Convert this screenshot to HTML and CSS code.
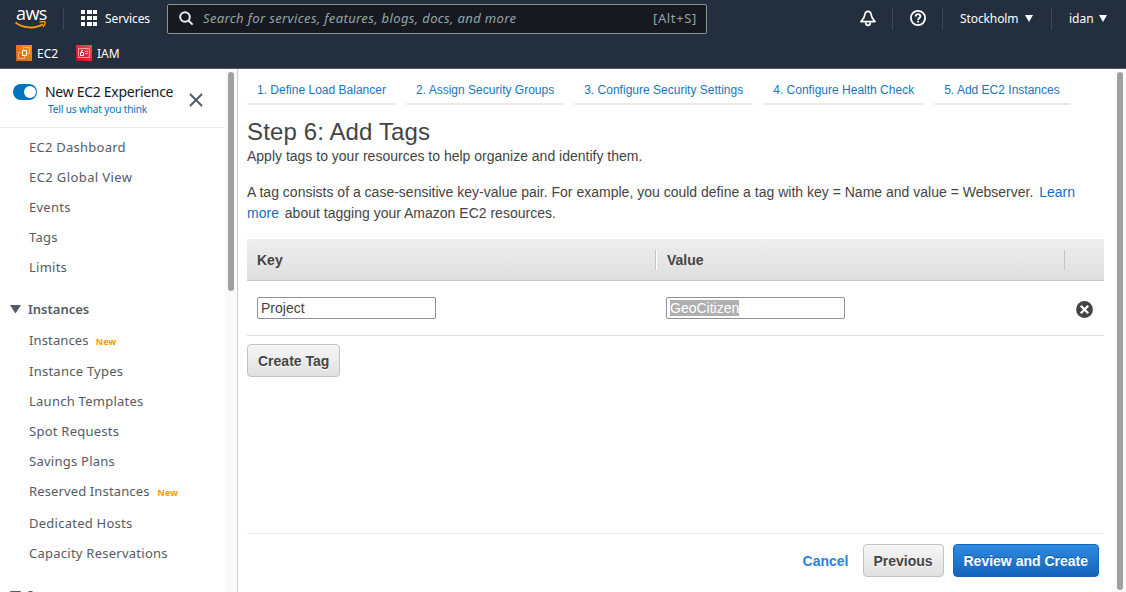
FILE: index.html
```
<!DOCTYPE html>
<html lang="en">
<head>
<meta charset="utf-8">
<title>Step 6: Add Tags</title>
<link rel="stylesheet" href="styles.css">
</head>
<body>
<header class="header">
  <div class="topbar">
    <a class="logo"><span class="logo-text">aws</span>
      <svg class="smile" width="32" height="9" viewBox="0 0 32 9"><path d="M.5 1.500C8 7.500 20 8 28 3.200" fill="none" stroke="#f90" stroke-width="1.900"/><path d="M24.500 1.200C27 .5 29.500 .4 30 1C30.400 2 29.500 4.500 28 6" fill="none" stroke="#f90" stroke-width="1.400"/></svg>
    </a>
    <span class="sep"></span>
    <a class="services">
      <svg width="17" height="17" viewBox="0 0 17 17" fill="#fff"><path d="M0 0h4v4H0zM6 0h5v4H6zM12 0h4v4h-4zM0 6h4v4H0zM6 6h5v4H6zM12 6h4v4h-4zM0 12h4v4H0zM6 12h5v4H6zM12 12h4v4h-4z"/></svg>
      <span class="services-text">Services</span>
    </a>
    <div class="search">
      <svg width="15" height="15" viewBox="0 0 15 15" fill="none" stroke="#eaeded" stroke-width="2"><circle cx="6" cy="6" r="4.800"/><path d="M9.500 9.500L13.600 13.600"/></svg>
      <span class="search-hint">Search for services, features, blogs, docs, and more</span>
      <span class="search-key">[Alt+S]</span>
    </div>
    <div class="tools">
      <svg class="bell" width="16" height="17" viewBox="0 0 16 17" fill="none" stroke="#fff" stroke-width="1.700" stroke-linejoin="round"><path d="M8 1.400C6 1.400 5 3 4.700 5.200C4.300 8.300 2.800 9 1 11.600H15C13.200 9 11.700 8.300 11.300 5.200C11 3 10 1.400 8 1.400Z"/><path d="M5.700 12.500C5.700 16.400 10.300 16.400 10.300 12.500"/></svg>
      <span class="sep"></span>
      <svg class="help" width="16" height="16" viewBox="0 0 16 16" fill="none" stroke="#fff" stroke-width="1.800"><circle cx="8" cy="8" r="7.100"/><path d="M5.700 6.400C5.700 3.500 10.400 3.500 10.400 6.300C10.400 8 8.100 7.900 8.100 9.900"/><path d="M8.100 10.800V12.600"/></svg>
      <span class="sep"></span>
      <span class="region">Stockholm</span><svg width="8" height="7" viewBox="0 0 8 7"><path d="M0 0H8L4 7Z" fill="#fff"/></svg>
      <span class="sep"></span>
      <span class="user">idan</span><svg width="8" height="7" viewBox="0 0 8 7"><path d="M0 0H8L4 7Z" fill="#fff"/></svg>
    </div>
  </div>
  <div class="favorites">
    <svg width="16" height="16" viewBox="0 0 16 16"><defs><linearGradient id="ec2" x1="0" y1="1" x2="1" y2="0"><stop stop-color="#d8640f"/><stop offset="1" stop-color="#f59010"/></linearGradient></defs><path d="M0 0H16V16H0Z" fill="url(#ec2)"/><g fill="none" stroke="#fff" stroke-width="1"><path d="M6.500 5.500h4v5h-4z"/><path d="M5 7.500H2.500V13.500H8.500V11" opacity=".45"/><path d="M7.500 5V2.500H13.500V8.500H11" opacity=".45"/></g></svg>
    <span class="fav-ec2">EC2</span>
    <svg width="16" height="16" viewBox="0 0 16 16"><defs><linearGradient id="iam" x1="0" y1="1" x2="1" y2="0"><stop stop-color="#c90c1d"/><stop offset="1" stop-color="#f84a50"/></linearGradient></defs><path d="M0 0H16V16H0Z" fill="url(#iam)"/><g fill="none" stroke="#fff" stroke-width="1"><path d="M2.500 3.500h11v9h-11z" opacity=".55"/><path d="M4.500 7.500h3v3h-3zM5.500 7V5.500H7"/><path d="M9 6.500h3M9 8.500h3" opacity=".6"/></g></svg>
    <span class="fav-iam">IAM</span>
  </div>
</header>
<div class="body">
  <aside class="sidebar">
    <div class="side-content">
      <div class="experience">
        <span class="toggle"><i class="knob"></i></span>
        <div class="exp-text"><div class="exp-title">New EC2 Experience</div><a class="exp-link">Tell us what you think</a></div>
        <svg class="close" width="14" height="14" viewBox="0 0 14 14" stroke="#545b64" stroke-width="2"><path d="M1 1L13 13M13 1L1 13"/></svg>
      </div>
      <nav class="links">
        <a class="link">EC2 Dashboard</a>
        <a class="link wide">EC2 Global View</a>
        <a class="link">Events</a>
        <a class="link">Tags</a>
        <a class="link">Limits</a>
      </nav>
      <div class="group"><svg width="11" height="9" viewBox="0 0 11 9"><path d="M0 0H11L5.500 8.500Z" fill="#545b64"/></svg><span class="group-text">Instances</span></div>
      <nav class="links">
        <a class="link tall"><span class="narrow">Instances</span><b class="new">New</b></a>
        <a class="link">Instance Types</a>
        <a class="link">Launch Templates</a>
        <a class="link">Spot Requests</a>
        <a class="link">Savings Plans</a>
        <a class="link tall reserved"><span class="narrow">Reserved Instances</span><b class="new">New</b></a>
        <a class="link">Dedicated Hosts</a>
        <a class="link">Capacity Reservations</a>
      </nav>
      <div class="group"><svg width="11" height="9" viewBox="0 0 11 9"><path d="M0 0H11L5.500 8.500Z" fill="#545b64"/></svg><span class="group-text">Images</span></div>
    </div>
    <div class="track"><div class="thumb side-thumb"></div></div>
  </aside>
  <main class="main">
    <nav class="tabs">
      <a class="tab">1. Define Load Balancer</a>
      <a class="tab">2. Assign Security Groups</a>
      <a class="tab">3. Configure Security Settings</a>
      <a class="tab">4. Configure Health Check</a>
      <a class="tab">5. Add EC2 Instances</a>
    </nav>
    <h1 class="title">Step 6: Add Tags</h1>
    <p class="sub">Apply tags to your resources to help organize and identify them.</p>
    <p class="desc">A tag consists of a case-sensitive key-value pair. For example, you could define a tag with key = Name and value = Webserver. <a class="learn">Learn more</a> about tagging your Amazon EC2 resources.</p>
    <div class="thead"><div class="th key">Key</div><div class="th value">Value</div><div class="th end"></div></div>
    <div class="row">
      <div class="input">Project</div>
      <div class="input second"><span class="selected">GeoCitizen</span></div>
      <svg class="remove" width="17" height="17" viewBox="0 0 17 17"><circle cx="8.500" cy="8.500" r="8.400" fill="#444"/><path d="M4.800 4.800L12.200 12.200M12.200 4.800L4.800 12.200" stroke="#fff" stroke-width="2.300"/></svg>
    </div>
    <button class="btn create">Create Tag</button>
    <footer class="actions">
      <a class="cancel">Cancel</a>
      <button class="btn previous">Previous</button>
      <button class="btn primary">Review and Create</button>
    </footer>
  </main>
  <div class="track"><div class="thumb main-thumb"></div></div>
</div>
</body>
</html>
```
FILE: styles.css
```
* { box-sizing: border-box; }
body { margin: 0; width: 1126px; height: 592px; overflow: hidden; background: #fff; font-family: "Liberation Sans", Arial, sans-serif; font-size: 14px; color: #444; }
svg { display: block; flex: none; }
.header { height: 69px; background: #232f3e; border-bottom: 1px solid #545b64; color: #fff; font-family: "Noto Sans", sans-serif; font-size: 12px; }
.topbar { height: 37px; display: flex; align-items: center; white-space: nowrap; }
.logo { width: 32px; height: 28px; margin-left: 15px; padding-top: 1px; }
.logo-text { display: block; height: 15px; padding-left: 1px; font-family: "Open Sans", sans-serif; font-size: 18px; line-height: 14px; font-weight: 500; letter-spacing: -.6px; }
.sep { width: 1px; height: 22px; background: #414750; flex: none; }
.logo + .sep { margin-left: 16px; }
.services { display: flex; align-items: center; margin-left: 17px; width: 86px; }
.services-text { margin-left: 7px; letter-spacing: -.1px; }
.search { width: 540px; height: 30px; border: 1px solid #879596; border-radius: 2px; background: #16191f; display: flex; align-items: center; padding: 0 9px 0 11px; color: #95a5a6; font-size: 13px; }
.search-hint { font-style: italic; margin-left: 9px; flex: 1; letter-spacing: .37px; padding-bottom: 2px; }
.search-key { letter-spacing: .65px; padding-bottom: 2px; }
.tools { display: flex; align-items: center; margin-left: 153px; }
.bell { margin-right: 16px; }
.help { margin: -1px 16px 0 17px; }
.region { width: 65px; margin-left: 17px; letter-spacing: -.1px; }
.region + svg + .sep { margin-left: 18px; }
.user { width: 30px; margin-left: 17px; }
.favorites { height: 31px; display: flex; align-items: center; padding-left: 16px; padding-top: 1px; }
.fav-ec2 { width: 39px; margin-left: 5px; padding-top: 1px; }
.fav-iam { margin-left: 5px; padding-top: 1px; }
.body { display: flex; height: 523px; }
.sidebar { width: 238px; display: flex; border-right: 1px solid #c8cccc; font-family: "Noto Sans", sans-serif; color: #545b64; }
.side-content { width: 225px; overflow: hidden; }
.track { width: 12px; background: #fafafa; padding: 3px 3px 0; flex: none; }
.thumb { width: 6px; border-radius: 3px; background: #a0a0a0; }
.side-thumb { height: 219px; }
.main-thumb { height: 518px; }
.experience { height: 59px; border-bottom: 1px solid #eaeded; display: flex; padding-left: 13px; white-space: nowrap; }
.toggle { width: 24px; height: 16px; margin-top: 15px; background: #0073bb; border-radius: 8px; padding: 2px 1px 0 11px; }
.knob { display: block; width: 12px; height: 12px; border-radius: 50%; background: #fff; }
.exp-text { width: 152px; padding: 14px 0 0 8px; }
.exp-title { font-size: 14px; line-height: 18px; color: #16191f; letter-spacing: -.29px; }
.exp-link { display: block; padding-left: 3px; font-size: 10px; line-height: 17px; color: #0073bb; letter-spacing: -.11px; }
.close { margin-top: 24px; }
.links { padding-left: 29px; font-size: 13px; letter-spacing: .25px; }
.links:first-of-type { padding-top: 4px; }
.link { display: flex; align-items: center; height: 30px; white-space: nowrap; }
.wide { letter-spacing: .4px; }
.narrow { letter-spacing: .13px; }
.tall { height: 32px; padding-bottom: 1px; }
.reserved { padding-bottom: 3px; }
.new { font-size: 9px; color: #f90; margin-left: 7px; padding-top: 3px; letter-spacing: .15px; }
.reserved .new { margin-left: 8px; }
.group { display: flex; align-items: center; height: 42px; padding: 12px 0 0 10px; font-size: 13px; font-weight: 600; }
.group-text { margin-left: 7px; }
.main { width: 876px; padding: 8px 10px 0 9px; }
.tabs { display: flex; gap: 10px; font-size: 12px; color: #1b75bb; letter-spacing: .008px; }
.tab { height: 28px; padding: 6px 10px 0; line-height: 14px; border-bottom: 2px solid #eaeaea; white-space: nowrap; }
.title { margin: 12px 0 0; font-size: 24px; line-height: 30px; font-weight: 400; letter-spacing: .13px; }
.sub { margin: 0; line-height: 18px; }
.desc { margin: 17px 0 0; line-height: 21px; letter-spacing: .005px; }
.learn { color: #146ebe; margin: 0 2px; }
.thead { width: 857px; height: 42px; margin-top: 15px; display: flex; align-items: center; background: linear-gradient(#eee, #dfdfdf); border-bottom: 1px solid #c4c4c4; font-weight: 700; }
.th { height: 20px; line-height: 20px; padding-left: 10px; }
.key { width: 408px; }
.value { width: 409px; border-left: 1px solid #c5c5c5; box-shadow: inset 1px 0 #fff; padding-left: 11px; }
.end { border-left: 1px solid #c5c5c5; }
.row { width: 857px; height: 55px; display: flex; align-items: center; padding-left: 10px; border-bottom: 1px solid #ddd; }
.input { width: 179px; height: 22px; border: 1px solid #8f8f9d; border-radius: 2px; padding: 2px 3px; line-height: 16px; }
.second { margin-left: 230px; }
.selected { display: inline-block; background: #b0b0b0; color: #fff; }
.remove { margin-left: 231px; margin-top: 2px; }
.btn { height: 33px; padding: 0 10px; border: 1px solid #c3c3c3; border-radius: 4px; background: linear-gradient(#f6f6f6, #e0e0e0); font: 700 14px "Liberation Sans", Arial, sans-serif; color: #444; white-space: nowrap; text-shadow: 0 1px #fff; }
.create { display: block; margin-top: 8px; }
.previous { width: 81px; padding: 0; }
.primary { margin-left: 9px; border-color: #1166bb; background: linear-gradient(#308be0, #1264ba); color: #fff; text-shadow: 0 -1px #1258a4; }
.actions { width: 857px; margin-top: 156px; height: 59px; padding: 10px 5px 0 0; border-top: 1px solid #eaeaea; display: flex; justify-content: flex-end; align-items: flex-start; }
.cancel { line-height: 34px; font-weight: 700; color: #2d82db; margin-right: 14px; }
```
